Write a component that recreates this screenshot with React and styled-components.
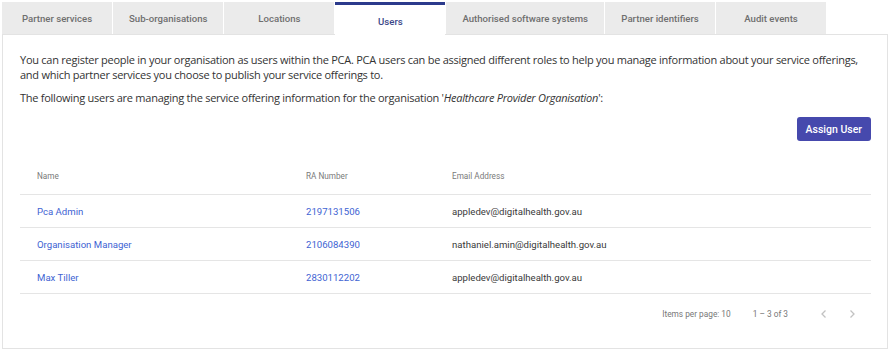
import React from 'react'
import styled, { createGlobalStyle } from 'styled-components'

const GlobalStyle = createGlobalStyle`
  body {
    margin: 0;
    background: #fff;
    font-family: Roboto, "Liberation Sans", sans-serif;
  }
`

const Page = styled.div`
  padding: 2px 3px 2px 2px;
`

const TabBar = styled.div`
  display: flex;
  gap: 1px;
  height: 32px;
  position: relative;
  z-index: 1;
`

const Tab = styled.div`
  box-sizing: border-box;
  min-width: 110px;
  padding: ${(p) => (p.active ? '3px 16px 0' : '0 16px')};
  height: ${(p) => (p.active ? '33px' : '32px')};
  display: flex;
  align-items: center;
  justify-content: center;
  font-size: 9.6px;
  font-weight: 500;
  color: ${(p) => (p.active ? '#3c4789' : '#6f6f6f')};
  background: ${(p) => (p.active ? '#fff' : '#ebebeb')};
  border-top: ${(p) => (p.active ? '3px solid #2b3a8c' : 'none')};
  white-space: nowrap;
`

const Panel = styled.div`
  border: 1px solid #e3e3e3;
  background: #fff;
  padding: 17px 16px 16px 17px;
  height: 315px;
  box-sizing: border-box;
`

const Text = styled.p`
  margin: 0 0 8px;
  font-family: "Open Sans", sans-serif;
  font-size: 11px;
  line-height: 15px;
  color: #333;
  letter-spacing: -0.26px;
  em {
    font-style: italic;
  }
`

const Actions = styled.div`
  display: flex;
  justify-content: flex-end;
  margin-top: 12px;
`

const Button = styled.button`
  height: 24px;
  padding: 0 9px;
  border: none;
  border-radius: 3px;
  background: #4649ad;
  color: #fff;
  font-family: Roboto, sans-serif;
  font-weight: 500;
  font-size: 10.5px;
`

const Table = styled.div`
  margin-top: 17px;
`

const Row = styled.div`
  display: grid;
  grid-template-columns: 269px 146px 1fr;
  align-items: center;
  height: ${(p) => (p.head ? '36px' : '32px')};
  border-bottom: 1px solid #e5e5e5;
`

const Cell = styled.div`
  padding-left: 17px;
  font-size: ${(p) => (p.head ? '8.2px' : '9.6px')};
  color: ${(p) => (p.head ? '#7a7a7a' : p.link ? '#3e63d3' : '#3a3a3a')};
`

const Paginator = styled.div`
  display: flex;
  align-items: center;
  justify-content: flex-end;
  height: 40px;
  padding-right: 5px;
  font-size: 8.3px;
  color: #777;
`

const Range = styled.span`
  margin-left: 22px;
`

const NavButton = styled.span`
  display: flex;
  align-items: center;
  justify-content: center;
  width: 28px;
  margin-left: ${(p) => p.gap || 0}px;
  color: #c2c2c2;
`

const Chevron = ({ left }) => (
  <svg width="10" height="10" viewBox="0 0 10 10" fill="none">
    <path
      d={left ? 'M6.5 1.5 3 5l3.5 3.5' : 'M3.5 1.5 7 5 3.5 8.5'}
      stroke="currentColor"
      strokeWidth="1.3"
    />
  </svg>
)

const tabs = [
  'Partner services',
  'Sub-organisations',
  'Locations',
  'Users',
  'Authorised software systems',
  'Partner identifiers',
  'Audit events',
]

const users = [
  { name: 'Pca Admin', ra: '2197131506', email: 'appledev@digitalhealth.gov.au' },
  { name: 'Organisation Manager', ra: '2106084390', email: 'nathaniel.amin@digitalhealth.gov.au' },
  { name: 'Max Tiller', ra: '2830112202', email: 'appledev@digitalhealth.gov.au' },
]

export default function App() {
  return (
    <Page>
      <GlobalStyle />
      <TabBar>
        {tabs.map((t) => (
          <Tab key={t} active={t === 'Users'}>
            {t}
          </Tab>
        ))}
      </TabBar>
      <Panel>
        <Text>
          You can register people in your organisation as users within the PCA. PCA users can be assigned different roles to help you manage information about your service offerings, and which partner services you choose to publish your service offerings to.
        </Text>
        <Text>
          The following users are managing the service offering information for the organisation '<em>Healthcare Provider Organisation</em>':
        </Text>
        <Actions>
          <Button>Assign User</Button>
        </Actions>
        <Table>
          <Row head>
            <Cell head>Name</Cell>
            <Cell head>RA Number</Cell>
            <Cell head>Email Address</Cell>
          </Row>
          {users.map((u) => (
            <Row key={u.ra}>
              <Cell link>{u.name}</Cell>
              <Cell link>{u.ra}</Cell>
              <Cell>{u.email}</Cell>
            </Row>
          ))}
          <Paginator>
            <span>Items per page: 10</span>
            <Range>1 – 3 of 3</Range>
            <NavButton gap={22}>
              <Chevron left />
            </NavButton>
            <NavButton>
              <Chevron />
            </NavButton>
          </Paginator>
        </Table>
      </Panel>
    </Page>
  )
}
